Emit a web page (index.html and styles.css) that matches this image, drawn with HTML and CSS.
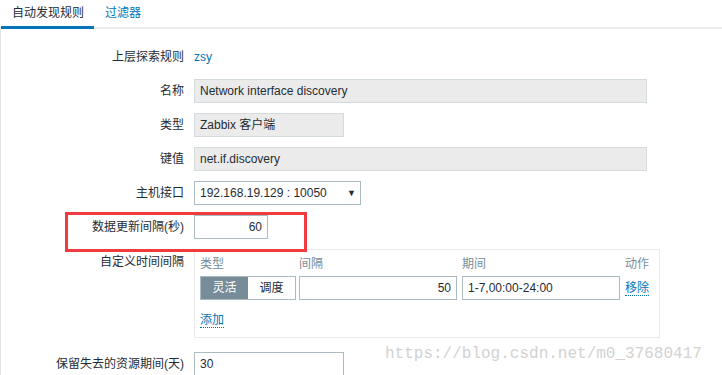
FILE: index.html
```html
<!DOCTYPE html>
<html lang="zh-CN">
<head>
    <meta charset="UTF-8">
    <title>自动发现规则</title>
    <link rel="stylesheet" href="styles.css">
</head>
<body>
    <ul class="tabs">
        <li class="tab active">自动发现规则</li>
        <li class="tab">过滤器</li>
    </ul>
    <div class="panel">
        <div class="form">
            <label class="label">上层探索规则</label>
            <div class="field"><a class="link">zsy</a></div>

            <label class="label">名称</label>
            <div class="field"><div class="input readonly wide">Network interface discovery</div></div>

            <label class="label">类型</label>
            <div class="field"><div class="input readonly w150">Zabbix 客户端</div></div>

            <label class="label">键值</label>
            <div class="field"><div class="input readonly wide">net.if.discovery</div></div>

            <label class="label">主机接口</label>
            <div class="field">
                <div class="input select">192.168.19.129 : 10050<span class="arrow">▼</span></div>
            </div>

            <label class="label">数据更新间隔(秒)</label>
            <div class="field"><div class="input num w74">60</div></div>

            <label class="label top">自定义时间间隔</label>
            <div class="field">
                <div class="intervals">
                    <div class="iv-row head">
                        <span class="c-type">类型</span>
                        <span class="c-int">间隔</span>
                        <span class="c-per">期间</span>
                        <span class="c-act">动作</span>
                    </div>
                    <div class="iv-row">
                        <div class="c-type seg">
                            <span class="seg-btn on">灵活</span>
                            <span class="seg-btn">调度</span>
                        </div>
                        <div class="c-int input num">50</div>
                        <div class="c-per input">1-7,00:00-24:00</div>
                        <a class="c-act link dotted">移除</a>
                    </div>
                    <a class="link dotted add">添加</a>
                </div>
            </div>

            <label class="label last">保留失去的资源期间(天)</label>
            <div class="field last"><div class="input w150">30</div></div>
        </div>
        <div class="mark"></div>
        <div class="watermark">https://blog.csdn.net/m0_37680417</div>
    </div>
</body>
</html>
```
FILE: styles.css
```css
html, body {
    overflow: hidden;
}
body {
    margin: 0;
    font-family: "Liberation Sans", Arial, "Noto Sans CJK SC", sans-serif;
    font-size: 12px;
    color: #1f2c33;
    background: #fff;
}
.tabs {
    list-style: none;
    margin: 0;
    padding: 0 0 0 1px;
    display: flex;
    height: 27px;
    border-bottom: 2px solid #ebeef0;
}
.tab {
    padding: 0 10px 0 11px;
    line-height: 27px;
    color: #0275b8;
}
.tab.active {
    color: #1f2c33;
    border-bottom: 3px solid #0275b8;
    margin-bottom: -2px;
}
.panel {
    position: relative;
    border-left: 1px solid #dfe4e7;
    padding-top: 16px;
    height: 330px;
}
.form {
    display: grid;
    grid-template-columns: 183px 1fr;
    column-gap: 10px;
    row-gap: 10px;
}
.label {
    text-align: right;
    line-height: 24px;
}
.label.top {
    line-height: 14px;
    padding-top: 6px;
}
.field {
    display: flex;
    align-items: center;
    min-height: 24px;
}
.link {
    color: #0275b8;
    text-decoration: none;
}
.dotted {
    border-bottom: 1px dotted #0275b8;
    line-height: 14px;
}
.input {
    box-sizing: border-box;
    height: 24px;
    line-height: 22px;
    border: 1px solid #acbbc2;
    padding: 0 5px;
    background: #fff;
    white-space: nowrap;
}
.readonly {
    background: #ebebeb;
    border-color: #d3dbdf;
}
.wide {
    width: 453px;
}
.w150 {
    width: 150px;
}
.w74 {
    width: 74px;
}
.num {
    text-align: right;
}
.select {
    width: 167px;
    display: flex;
    justify-content: space-between;
    padding-right: 4px;
}
.arrow {
    font-size: 9px;
}
.intervals {
    box-sizing: border-box;
    width: 466px;
    height: 89px;
    border: 1px solid #ebebeb;
    padding: 5px 10px 0 5px;
}
.iv-row {
    display: flex;
    align-items: center;
}
.iv-row.head {
    color: #768d99;
    height: 14px;
    margin-bottom: 7px;
}
.c-type {
    width: 96px;
    margin-right: 3px;
    flex: none;
}
.c-int {
    width: 158px;
    margin-right: 5px;
    flex: none;
}
.c-per {
    width: 158px;
    margin-right: 5px;
    flex: none;
}
.c-act {
    margin-left: auto;
}
.seg {
    display: flex;
    height: 24px;
    box-sizing: border-box;
    border: 1px solid #acbbc2;
}
.seg-btn {
    flex: 1;
    text-align: center;
    line-height: 22px;
}
.seg-btn.on {
    background: #768d99;
    color: #fff;
}
.add {
    display: inline-block;
    margin-top: 13px;
}
.label.last {
    margin-top: 4px;
}
.field.last {
    margin-top: 4px;
    align-items: flex-start;
}
.mark {
    position: absolute;
    left: 64px;
    top: 183px;
    width: 236px;
    height: 34px;
    border: 3px solid #ef3a3f;
}
.watermark {
    position: absolute;
    left: 384px;
    top: 316px;
    font-family: "Liberation Mono", monospace;
    font-size: 16px;
    color: #d2d2d2;
}
```
